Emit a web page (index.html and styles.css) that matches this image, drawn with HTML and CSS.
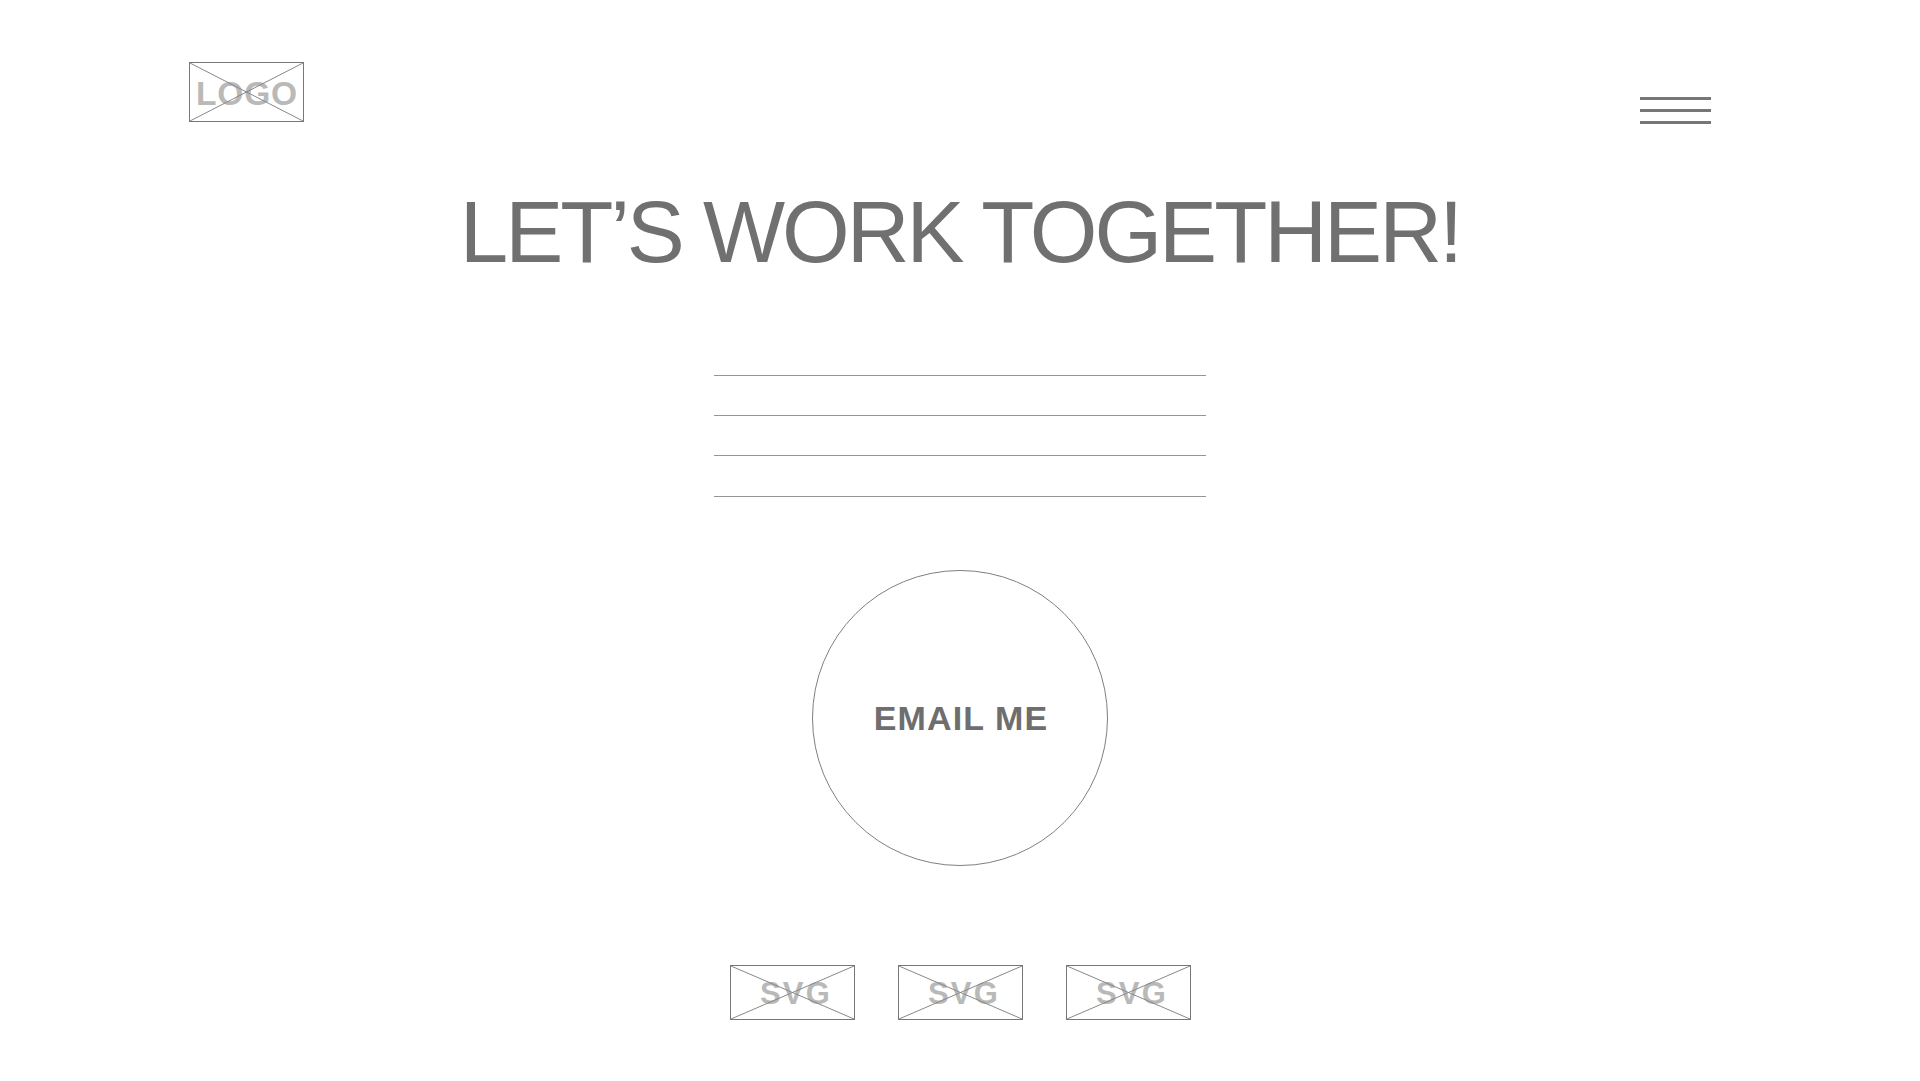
FILE: index.html
```html
<!DOCTYPE html>
<html lang="en">
<head>
<meta charset="utf-8">
<title>Let's work together</title>
<link rel="stylesheet" href="styles.css">
</head>
<body>
<header class="site-header">
  <div class="placeholder logo">
    <span class="ph-label logo-label">LOGO</span>
    <svg class="ph-cross" viewBox="0 0 100 100" preserveAspectRatio="none"><line x1="0" y1="0" x2="100" y2="100" vector-effect="non-scaling-stroke"/><line x1="100" y1="0" x2="0" y2="100" vector-effect="non-scaling-stroke"/></svg>
  </div>
  <button class="menu" aria-label="Menu">
    <span class="menu-bar"></span>
    <span class="menu-bar"></span>
    <span class="menu-bar"></span>
  </button>
</header>
<main class="content">
  <h1 class="title">LET’S WORK TOGETHER!</h1>
  <form class="fields">
    <div class="field"></div>
    <div class="field"></div>
    <div class="field"></div>
    <div class="field"></div>
  </form>
  <a class="email-btn" href="#">EMAIL ME</a>
  <div class="socials">
    <div class="placeholder social">
      <span class="ph-label svg-label">SVG</span>
      <svg class="ph-cross" viewBox="0 0 100 100" preserveAspectRatio="none"><line x1="0" y1="0" x2="100" y2="100" vector-effect="non-scaling-stroke"/><line x1="100" y1="0" x2="0" y2="100" vector-effect="non-scaling-stroke"/></svg>
    </div>
    <div class="placeholder social">
      <span class="ph-label svg-label">SVG</span>
      <svg class="ph-cross" viewBox="0 0 100 100" preserveAspectRatio="none"><line x1="0" y1="0" x2="100" y2="100" vector-effect="non-scaling-stroke"/><line x1="100" y1="0" x2="0" y2="100" vector-effect="non-scaling-stroke"/></svg>
    </div>
    <div class="placeholder social">
      <span class="ph-label svg-label">SVG</span>
      <svg class="ph-cross" viewBox="0 0 100 100" preserveAspectRatio="none"><line x1="0" y1="0" x2="100" y2="100" vector-effect="non-scaling-stroke"/><line x1="100" y1="0" x2="0" y2="100" vector-effect="non-scaling-stroke"/></svg>
    </div>
  </div>
</main>
</body>
</html>
```
FILE: styles.css
```css
* { box-sizing: border-box; }
html, body {
  margin: 0;
  padding: 0;
  background: #ffffff;
  font-family: "Liberation Sans", Arial, Helvetica, sans-serif;
  color: #707070;
}

.site-header {
  display: flex;
  justify-content: space-between;
  align-items: flex-start;
  padding: 62px 209px 0 189px;
}

.placeholder {
  position: relative;
  display: flex;
  align-items: center;
  justify-content: center;
  border: 1px solid #777;
  background: #fff;
}
.ph-cross {
  position: absolute;
  inset: 0;
  width: 100%;
  height: 100%;
  stroke: #888;
  stroke-width: 1;
}
.ph-label {
  font-weight: 700;
  color: #b9b9b9;
  line-height: 1;
}

.logo {
  width: 115px;
  height: 60px;
}
.logo-label {
  font-size: 33.5px;
  letter-spacing: 0.8px;
  padding-left: 1px;
  margin-top: 4px;
}

.menu {
  margin-top: 35px;
  padding: 0;
  border: 0;
  background: transparent;
  display: flex;
  flex-direction: column;
  gap: 9px;
  width: 71px;
}
.menu-bar {
  display: block;
  height: 3px;
  width: 71px;
  background: #777;
}

.content {
  display: flex;
  flex-direction: column;
  align-items: center;
}

.title {
  margin: 64px 0 0;
  font-size: 87px;
  line-height: 87px;
  font-weight: 400;
  letter-spacing: -3px;
  color: #707070;
  text-align: center;
}

.fields {
  margin-top: 60.5px;
  width: 492px;
  display: flex;
  flex-direction: column;
}
.field {
  height: 40.3px;
  border-bottom: 1px solid #959595;
}

.email-btn {
  margin-top: 73px;
  width: 296px;
  height: 296px;
  border-radius: 50%;
  border: 1px solid #808080;
  display: flex;
  align-items: center;
  justify-content: center;
  text-decoration: none;
  color: #6e6e6e;
  font-weight: 700;
  font-size: 34px;
  letter-spacing: 1.1px;
  line-height: 1;
  padding-left: 2px;
}

.socials {
  margin-top: 99px;
  display: flex;
  gap: 43px;
}
.social {
  width: 125px;
  height: 55px;
}
.svg-label {
  font-size: 31px;
  letter-spacing: 2.2px;
  padding-left: 8px;
  margin-top: 3px;
}
```
